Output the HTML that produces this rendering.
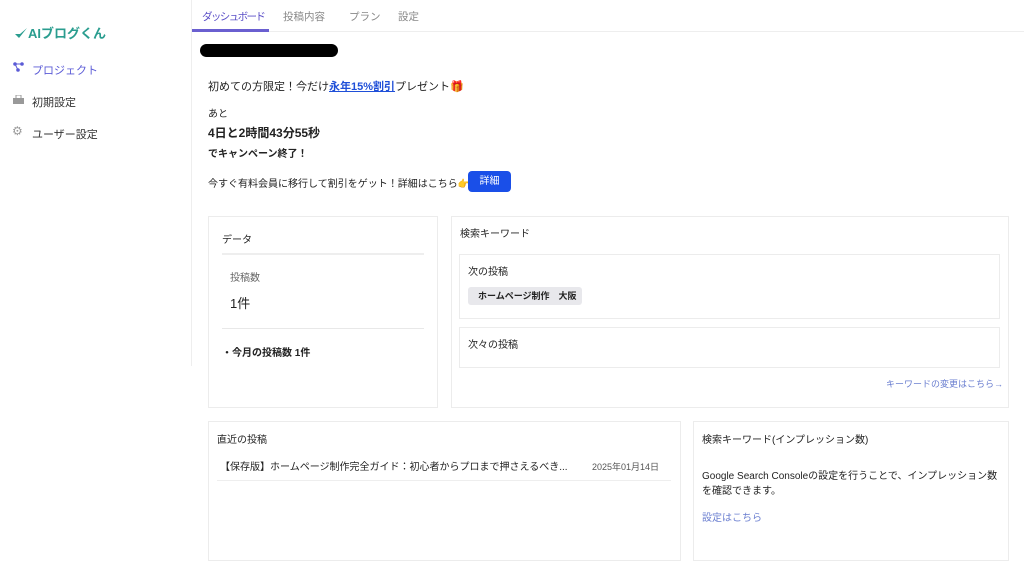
<!DOCTYPE html>
<html><head><meta charset="utf-8"><style>
*{margin:0;padding:0;box-sizing:border-box}
body{width:1024px;height:556px;overflow:hidden;background:#fff;font-family:"Liberation Sans","Noto Sans CJK JP",sans-serif;color:#222;font-size:11px;position:relative}
.a{position:absolute;white-space:nowrap}
.card{position:absolute;border:1px solid #ececec;background:#fff}
.sb{position:absolute;left:191px;top:0;width:1px;height:366px;background:#eee}
.tab{position:absolute;top:9px;font-size:10.5px;color:#888}
.nav{position:absolute;left:32px;font-size:11px;color:#333}
</style></head><body>
<div class="sb"></div>
<div class="a" style="left:14px;top:23px;font-size:13px;font-weight:bold;color:#2a9d8f">
<svg width="14" height="14" viewBox="0 0 14 14" style="vertical-align:-2px"><path d="M1 8 L5 12 L13 2 L6 8 Z" fill="#2a9d8f"/></svg>AIブログくん</div>
<svg class="a" style="left:13px;top:62px" width="11" height="10" viewBox="0 0 11 10"><circle cx="2" cy="2" r="1.8" fill="#5b5bd6"/><circle cx="9" cy="2" r="1.8" fill="#5b5bd6"/><circle cx="5" cy="8" r="1.8" fill="#5b5bd6"/><path d="M2 2 L9 2 M2 2 L5 8" stroke="#5b5bd6"/></svg>
<div class="nav" style="top:62px;color:#5b5bd6">プロジェクト</div>
<svg class="a" style="left:13px;top:95px" width="11" height="9" viewBox="0 0 11 9"><rect x="0" y="3" width="11" height="6" fill="#999"/><rect x="3" y="0" width="5" height="4" fill="none" stroke="#999"/></svg>
<div class="nav" style="top:94px">初期設定</div>
<div class="a" style="left:12px;top:124px;color:#999;font-size:12px">⚙</div>
<div class="nav" style="top:126px">ユーザー設定</div>

<div class="a" style="left:192px;top:31px;width:832px;height:1px;background:#eee"></div>
<div class="tab" style="left:202px;color:#5b4fc7;letter-spacing:-1.6px">ダッシュボード</div>
<div class="a" style="left:192px;top:29px;width:77px;height:3px;background:#6a5fd0"></div>
<div class="tab" style="left:283px">投稿内容</div>
<div class="tab" style="left:349px">プラン</div>
<div class="tab" style="left:398px">設定</div>

<div class="a" style="left:200px;top:44px;width:138px;height:13px;background:#000;border-radius:7px"></div>
<div class="a" style="left:208px;top:78px">初めての方限定！今だけ<span style="color:#1f4fd8;font-weight:bold;text-decoration:underline">永年15%割引</span>プレゼント<span style="color:#e8a02a">🎁</span></div>
<div class="a" style="left:208px;top:105px;font-size:10px">あと</div>
<div class="a" style="left:208px;top:124px;font-size:12px;font-weight:bold">4日と2時間43分55秒</div>
<div class="a" style="left:208px;top:145px;font-size:10px;font-weight:bold">でキャンペーン終了！</div>
<div class="a" style="left:208px;top:175px;font-size:10px">今すぐ有料会員に移行して割引をゲット！詳細はこちら<span style="color:#e8a02a">👉</span></div>
<div class="a" style="left:468px;top:171px;width:43px;height:21px;background:#1a4fe8;border-radius:4px;color:#fff;font-size:10px;text-align:center;line-height:21px">詳細</div>

<div class="card" style="left:208px;top:216px;width:230px;height:192px"></div>
<div class="a" style="left:222px;top:231px;font-size:10px">データ</div>
<div class="a" style="left:222px;top:253px;width:202px;height:2px;background:#eee"></div>
<div class="a" style="left:230px;top:269px;font-size:10px;color:#666">投稿数</div>
<div class="a" style="left:230px;top:293px;font-size:13px">1件</div>
<div class="a" style="left:222px;top:328px;width:202px;height:1px;background:#e8e8e8"></div>
<div class="a" style="left:222px;top:344px;font-size:10px;font-weight:bold">・今月の投稿数 1件</div>

<div class="card" style="left:451px;top:216px;width:558px;height:192px"></div>
<div class="a" style="left:460px;top:225px;font-size:10px">検索キーワード</div>
<div class="card" style="left:459px;top:254px;width:541px;height:65px"></div>
<div class="a" style="left:468px;top:263px;font-size:10px">次の投稿</div>
<div class="a" style="left:468px;top:287px;width:114px;height:18px;background:#e8e8ec;border-radius:3px;font-size:9px;font-weight:bold;line-height:18px;padding-left:10px">ホームページ制作　大阪</div>
<div class="card" style="left:459px;top:327px;width:541px;height:41px"></div>
<div class="a" style="left:468px;top:336px;font-size:10px">次々の投稿</div>
<div class="a" style="left:886px;top:377px;font-size:9px;color:#6b7fd0">キーワードの変更はこちら→</div>

<div class="card" style="left:208px;top:421px;width:473px;height:140px"></div>
<div class="a" style="left:217px;top:431px;font-size:10px">直近の投稿</div>
<div class="a" style="left:220px;top:458px;font-size:10px">【保存版】ホームページ制作完全ガイド：初心者からプロまで押さえるべき...</div>
<div class="a" style="left:592px;top:460px;font-size:9px;color:#555">2025年01月14日</div>
<div class="a" style="left:217px;top:480px;width:454px;height:1px;background:#eee"></div>

<div class="card" style="left:693px;top:421px;width:316px;height:140px"></div>
<div class="a" style="left:702px;top:431px;font-size:10px">検索キーワード(インプレッション数)</div>
<div class="a" style="left:702px;top:469px;font-size:10px;line-height:15px;white-space:normal;width:302px">Google Search Consoleの設定を行うことで、インプレッション数を確認できます。</div>
<div class="a" style="left:702px;top:509px;font-size:10px;color:#6b7fd0">設定はこちら</div>
</body></html>
